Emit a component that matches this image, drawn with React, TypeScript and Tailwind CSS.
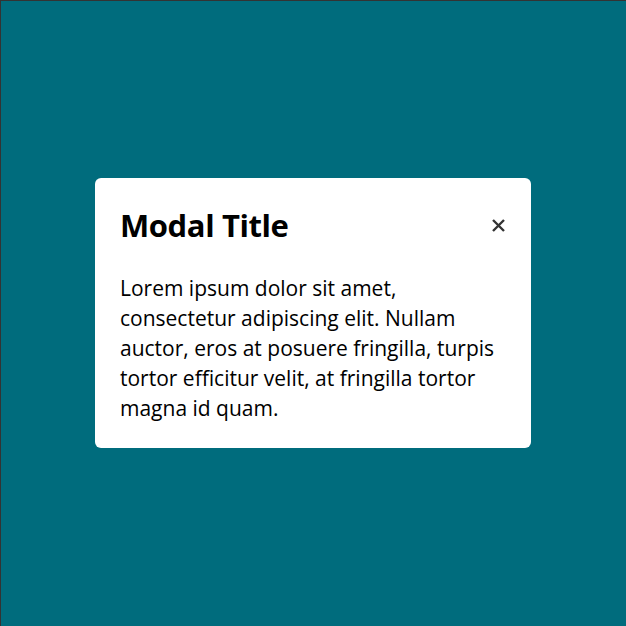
import React from "react";

export default function App() {
  return (
    <div className="w-[626px] h-[626px] bg-[#006c7d] shadow-[inset_1px_1px_0_#333333] flex items-center justify-center" style={{ fontFamily: '"Open Sans", "Liberation Sans", sans-serif' }}>
      <div className="w-[436px] bg-white rounded-[6px] px-[25px] pt-[27px] pb-[25px]">
        <div className="flex items-center justify-between">
          <h2 className="text-[31px] font-bold text-black leading-[40px] tracking-[-0.4px]">Modal Title</h2>
          <button className="w-[13px] h-[13px] flex items-center justify-center text-[#333333] mr-[1px]">
            <svg width="13" height="13" viewBox="0 0 13 13" fill="none" stroke="currentColor" strokeWidth="2.4" strokeLinecap="butt">
              <path d="M1 1 L12 12 M12 1 L1 12" />
            </svg>
          </button>
        </div>
        <p className="mt-[28px] text-[21px] leading-[30px] text-black whitespace-nowrap">
          Lorem ipsum dolor sit amet,<br />
          consectetur adipiscing elit. Nullam<br />
          auctor, eros at posuere fringilla, turpis<br />
          tortor efficitur velit, at fringilla tortor<br />
          magna id quam.
        </p>
      </div>
    </div>
  );
}
